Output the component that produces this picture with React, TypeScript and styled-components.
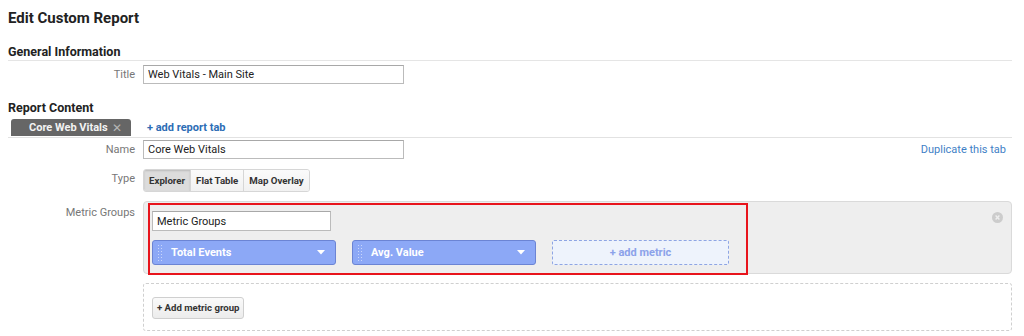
import styled, { createGlobalStyle } from "styled-components";

const GlobalStyle = createGlobalStyle`
  html, body {
    margin: 0;
    padding: 0;
    background: #fff;
    font-family: Roboto, "Liberation Sans", Arial, sans-serif;
    color: #222;
  }
`;

const Page = styled.div`
  padding: 8px 12px 0 8px;
  width: 1024px;
  height: 336px;
  box-sizing: border-box;
  overflow: hidden;
`;

const PageTitle = styled.h1`
  margin: 0;
  font-size: 15px;
  line-height: 20px;
  font-weight: 700;
  color: #222;
`;

const SectionHeading = styled.h2<{ $top: number; $ruled?: boolean }>`
  margin: ${(p) => p.$top}px 0 0;
  font-size: 12.5px;
  line-height: 16px;
  font-weight: 700;
  color: #222;
  border-bottom: ${(p) => (p.$ruled ? "1px solid #e5e5e5" : "none")};
`;

const Row = styled.div<{ $top: number }>`
  display: grid;
  grid-template-columns: 127px 1fr auto;
  column-gap: 8px;
  align-items: start;
  margin-top: ${(p) => p.$top}px;
`;

const Label = styled.div<{ $pad?: number }>`
  text-align: right;
  font-size: 11px;
  line-height: 19px;
  color: #777;
  padding-top: ${(p) => p.$pad ?? 0}px;
`;

const TextInput = styled.input<{ $width: number }>`
  display: block;
  box-sizing: border-box;
  width: ${(p) => p.$width}px;
  height: ${(p) => (p.$width < 200 ? 20 : 19)}px;
  border: 1px solid #bbb;
  border-top-color: #a8a8a8;
  padding: 0 4px;
  font-family: inherit;
  font-size: 11px;
  color: #222;
  background: #fff;
  outline: none;
`;

const TabBar = styled.div`
  display: flex;
  align-items: center;
  gap: 16px;
  margin-top: 2px;
  padding-left: 3px;
  border-bottom: 1px solid #e2e2e2;
`;

const Tab = styled.div`
  display: flex;
  align-items: center;
  justify-content: space-between;
  box-sizing: border-box;
  width: 120px;
  height: 17px;
  padding: 0 9px 0 18px;
  background: #666;
  border-radius: 3px 3px 0 0;
  color: #f2f2f2;
  font-size: 11px;
  font-weight: 700;
`;

const TabClose = styled.span`
  color: #b5b5b5;
  font-size: 12px;
  font-weight: 400;
`;

const Link = styled.a<{ $bold?: boolean }>`
  color: ${(p) => (p.$bold ? "#2d6db5" : "#3f7fc6")};
  font-size: 11px;
  font-weight: ${(p) => (p.$bold ? 700 : 400)};
  text-decoration: none;
  line-height: 19px;
  cursor: pointer;
`;

const RightLink = styled(Link)`
  padding-right: 6px;
`;

const ButtonGroup = styled.div`
  display: inline-flex;
  border: 1px solid #d6d6d6;
  border-radius: 3px;
  overflow: hidden;
  background: #f7f7f7;
`;

const TypeButton = styled.button<{ $active?: boolean }>`
  height: 21px;
  padding: 0 5px;
  border: none;
  border-left: 1px solid #d6d6d6;
  background: ${(p) => (p.$active ? "#dcdcdc" : "linear-gradient(#fbfbfb, #f1f1f1)")};
  box-shadow: ${(p) => (p.$active ? "inset 0 1px 2px rgba(0,0,0,0.15)" : "none")};
  font-family: inherit;
  font-size: 9.7px;
  font-weight: 700;
  color: #333;
  &:first-child {
    border-left: none;
  }
`;

const GroupPanel = styled.div`
  position: relative;
  box-sizing: border-box;
  height: 73px;
  padding: 1px 4px 0;
  background: #eeeeee;
  border: 1px solid #dadada;
  border-radius: 4px;
`;

const Highlight = styled.div`
  box-sizing: border-box;
  width: 600px;
  height: 72px;
  padding: 6px 2px;
  border: 2px solid #e8141c;
`;

const MetricRow = styled.div`
  display: flex;
  gap: 16px;
  margin-top: 9px;
`;

const MetricChip = styled.div`
  display: flex;
  align-items: center;
  box-sizing: border-box;
  width: 184px;
  height: 25px;
  padding: 0 10px 0 5px;
  background: #8ca8f6;
  border: 1px solid #6b84d4;
  border-radius: 3px;
  color: #fff;
  font-size: 11px;
  font-weight: 700;
`;

const ChipName = styled.span`
  flex: 1;
  margin-left: 9px;
`;

const AddMetric = styled.div`
  display: flex;
  align-items: center;
  justify-content: center;
  box-sizing: border-box;
  width: 177px;
  height: 25px;
  background: #eef3fc;
  border: 1px dashed #8ea5e4;
  border-radius: 2px;
  color: #8ca2ea;
  font-size: 11px;
  font-weight: 700;
`;

const RemoveIcon = styled.svg`
  position: absolute;
  top: 10px;
  right: 8px;
`;

const DropZone = styled.div`
  box-sizing: border-box;
  height: 48px;
  padding: 12px 8px;
  border: 1px dashed #cfcfcf;
  border-radius: 3px;
`;

const AddGroupButton = styled.button`
  height: 22px;
  padding: 0 4px;
  border: 1px solid #cfcfcf;
  border-radius: 3px;
  background: linear-gradient(#fafafa, #ececec);
  font-family: inherit;
  font-size: 9.6px;
  font-weight: 700;
  color: #333;
`;

const Grip = () => (
  <svg width="4" height="16" viewBox="0 0 4 16">
    {[0, 1, 2, 3, 4, 5].map((i) => (
      <g key={i} fill="#c9d6fb">
        <rect x="0" y={i * 3} width="1" height="1" />
        <rect x="3" y={i * 3} width="1" height="1" />
      </g>
    ))}
  </svg>
);

const Caret = () => (
  <svg width="8" height="5" viewBox="0 0 8 5">
    <path d="M0 0 L8 0 L4 4.5 Z" fill="#fff" />
  </svg>
);

const metrics = ["Total Events", "Avg. Value"];

const App = () => {
  return (
    <>
      <GlobalStyle />
      <Page>
        <PageTitle>Edit Custom Report</PageTitle>

        <SectionHeading $top={16} $ruled>
          General Information
        </SectionHeading>
        <Row $top={4}>
          <Label>Title</Label>
          <TextInput $width={261} defaultValue="Web Vitals - Main Site" />
        </Row>

        <SectionHeading $top={16}>Report Content</SectionHeading>
        <TabBar>
          <Tab>
            Core Web Vitals <TabClose>✕</TabClose>
          </Tab>
          <Link $bold>+ add report tab</Link>
        </TabBar>

        <Row $top={2}>
          <Label>Name</Label>
          <TextInput $width={261} defaultValue="Core Web Vitals" />
          <RightLink>Duplicate this tab</RightLink>
        </Row>

        <Row $top={10}>
          <Label>Type</Label>
          <div>
            <ButtonGroup>
              <TypeButton $active>Explorer</TypeButton>
              <TypeButton>Flat Table</TypeButton>
              <TypeButton>Map Overlay</TypeButton>
            </ButtonGroup>
          </div>
        </Row>

        <Row $top={9}>
          <Label $pad={2}>Metric Groups</Label>
          <div style={{ gridColumn: "2 / 4" }}>
            <GroupPanel>
              <Highlight>
                <TextInput $width={179} defaultValue="Metric Groups" />
                <MetricRow>
                  {metrics.map((m) => (
                    <MetricChip key={m}>
                      <Grip />
                      <ChipName>{m}</ChipName>
                      <Caret />
                    </MetricChip>
                  ))}
                  <AddMetric>+ add metric</AddMetric>
                </MetricRow>
              </Highlight>
              <RemoveIcon width="11" height="11" viewBox="0 0 11 11">
                <circle cx="5.5" cy="5.5" r="5.5" fill="#cccccc" />
                <path d="M3.6 3.6 L7.4 7.4 M7.4 3.6 L3.6 7.4" stroke="#eeeeee" strokeWidth="1.4" />
              </RemoveIcon>
            </GroupPanel>
          </div>
        </Row>

        <Row $top={9}>
          <div />
          <div style={{ gridColumn: "2 / 4" }}>
            <DropZone>
              <AddGroupButton>+ Add metric group</AddGroupButton>
            </DropZone>
          </div>
        </Row>
      </Page>
    </>
  );
};

export default App;
